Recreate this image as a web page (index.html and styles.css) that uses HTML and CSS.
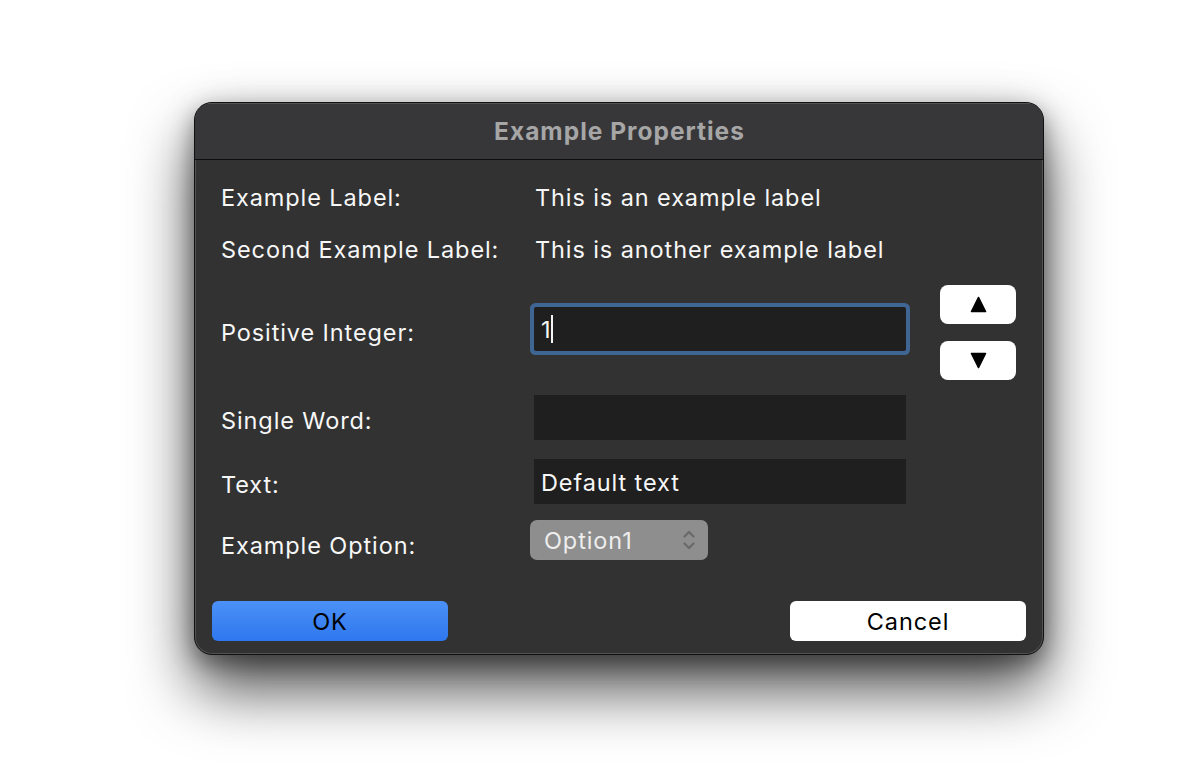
FILE: index.html
```html
<!DOCTYPE html>
<html>
<head>
<meta charset="utf-8">
<link rel="stylesheet" href="styles.css">
</head>
<body>
<div class="desk">
  <div class="window">
    <div class="titlebar">Example Properties</div>
    <div class="content">
      <div class="row row-info first">
        <span class="label">Example Label:</span>
        <span class="value">This is an example label</span>
      </div>
      <div class="row row-info second">
        <span class="label">Second Example Label:</span>
        <span class="value">This is another example label</span>
      </div>
      <div class="row row-int">
        <span class="label">Positive Integer:</span>
        <div class="field focused"><span class="field-text">1</span><span class="caret"></span></div>
        <div class="spin">
          <button class="spin-btn" aria-label="up">
            <svg width="18" height="18" viewBox="0 0 18 18"><path d="M9 1.5 L16.5 16.5 L1.5 16.5 Z" fill="#000" stroke="#000" stroke-width="1.5" stroke-linejoin="round"/></svg>
          </button>
          <button class="spin-btn" aria-label="down">
            <svg width="18" height="18" viewBox="0 0 18 18"><path d="M1.5 1.5 L16.5 1.5 L9 16.5 Z" fill="#000" stroke="#000" stroke-width="1.5" stroke-linejoin="round"/></svg>
          </button>
        </div>
      </div>
      <div class="row row-field word">
        <span class="label">Single Word:</span>
        <div class="field"></div>
      </div>
      <div class="row row-field text">
        <span class="label">Text:</span>
        <div class="field"><span class="field-text">Default text</span></div>
      </div>
      <div class="row row-select">
        <span class="label">Example Option:</span>
        <div class="select">
          <span class="select-text">Option1</span>
          <svg class="chev" width="14" height="22" viewBox="0 0 14 22"><path d="M2.5 7.5 L7 3 L11.5 7.5 M2.5 14.5 L7 19 L11.5 14.5" fill="none" stroke="#6b6b6b" stroke-width="2.4" stroke-linecap="round" stroke-linejoin="round"/></svg>
        </div>
      </div>
    </div>
    <div class="actions">
      <button class="btn btn-ok">OK</button>
      <button class="btn btn-cancel">Cancel</button>
    </div>
  </div>
</div>
</body>
</html>
```

FILE: styles.css
```css
html, body {
  margin: 0;
  padding: 0;
  background: #ffffff;
}

body {
  font-family: "Inter", "Liberation Sans", sans-serif;
  width: 1200px;
  height: 780px;
  overflow: hidden;
}

.desk {
  padding: 102px 0 0 194px;
}

.window {
  box-sizing: border-box;
  width: 850px;
  height: 553px;
  background: #323232;
  border: 1px solid #111111;
  border-radius: 18px;
  box-shadow:
    inset 0 0 0 1px rgba(255, 255, 255, 0.16),
    0 34px 62px rgba(0, 0, 0, 0.7),
    0 8px 22px rgba(0, 0, 0, 0.35),
    0 0 40px rgba(0, 0, 0, 0.08);
  display: flex;
  flex-direction: column;
  overflow: hidden;
}

.titlebar {
  height: 56px;
  flex: none;
  background: #37373a;
  border-bottom: 1px solid #0e0e0e;
  color: #a6a6a6;
  font-weight: 700;
  font-size: 24.5px;
  letter-spacing: 1px;
  display: flex;
  align-items: center;
  justify-content: center;
  padding-left: 1px;
  box-shadow: inset 0 1px 0 rgba(255, 255, 255, 0.14);
}

.content {
  padding: 0 0 0 26px;
  display: flex;
  flex-direction: column;
  color: #f7f7f7;
  font-size: 23.5px;
  letter-spacing: 0.9px;
}

.row {
  display: flex;
  align-items: center;
}

.label {
  width: 314px;
  flex: none;
}

.row-info {
  height: 36px;
}

.row-info.first {
  margin-top: 19px;
}

.row-info.second {
  margin-top: 16px;
}

.row-int {
  margin-top: 18px;
  height: 96px;
  align-items: flex-start;
}

.row-int .label {
  margin-top: 33px;
}

.field {
  box-sizing: border-box;
  width: 372px;
  height: 45px;
  margin-left: -1px;
  background: #1f1f1f;
  display: flex;
  align-items: center;
  padding-left: 7px;
}

.field.focused {
  height: 44px;
  margin-top: 22px;
  border-radius: 2px;
  box-shadow: 0 0 0 4px #3f6592;
}

.field-text {
  color: #f7f7f7;
  font-size: 23.5px;
  padding-top: 1px;
}

.caret {
  width: 2px;
  height: 28px;
  background: #f4f4f4;
}

.spin {
  margin-left: 34px;
  display: flex;
  flex-direction: column;
  gap: 17px;
}

.spin-btn {
  width: 76px;
  height: 39px;
  border: none;
  border-radius: 8px;
  background: #ffffff;
  display: flex;
  align-items: center;
  justify-content: center;
  padding: 0;
}

.spin-btn svg {
  width: 17px;
  height: 17px;
}

.row-field.word {
  margin-top: 14px;
}

.row-field.text {
  margin-top: 19px;
}

.row-field .label {
  padding-top: 5px;
}

.row-select {
  margin-top: 16px;
}

.row-select .label {
  padding-top: 10px;
}

.select {
  box-sizing: border-box;
  width: 178px;
  height: 40px;
  margin-left: -5px;
  background: #8e8e8e;
  border-radius: 7px;
  display: flex;
  align-items: center;
  justify-content: space-between;
  padding: 0 12px 0 14px;
}

.select-text {
  color: #ededed;
  font-size: 23.5px;
}

.chev {
  flex: none;
}

.actions {
  margin-top: auto;
  display: flex;
  justify-content: space-between;
  padding: 0 17px 13px 17px;
}

.btn {
  width: 236px;
  height: 40px;
  border: none;
  border-radius: 6px;
  font-family: "Inter", "Liberation Sans", sans-serif;
  font-size: 23.5px;
  letter-spacing: 0.9px;
  color: #000000;
  padding: 0;
}

.btn-ok {
  background: linear-gradient(#4b91f6, #2e77ef);
}

.btn-cancel {
  background: #ffffff;
}
```
